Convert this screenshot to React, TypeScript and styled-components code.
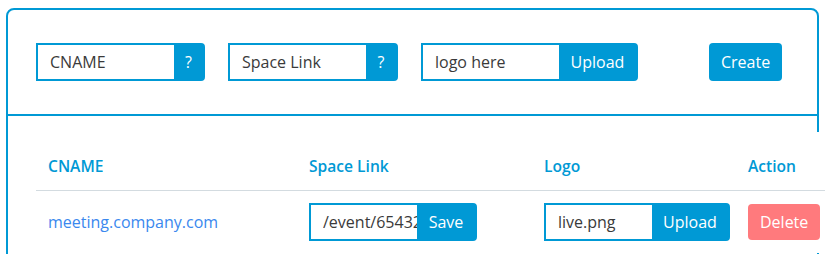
import React from 'react';
import styled, { createGlobalStyle } from 'styled-components';

const BLUE = '#0099d5';

const GlobalStyle = createGlobalStyle`
  body {
    margin: 0;
    background: #ffffff;
    font-family: 'Open Sans', 'Liberation Sans', sans-serif;
    overflow: hidden;
  }
`;

// Styled components
const Card = styled.div`
  margin: 8px 0 0 6px;
  width: 813px;
  min-height: 400px;
  box-sizing: border-box;
  border: 2px solid ${BLUE};
  border-radius: 8px;
`;

const CreateBar = styled.div`
  display: flex;
  align-items: center;
  gap: 23px;
  padding: 33px 0 33px 28px;
  border-bottom: 2px solid ${BLUE};
`;

const InputGroup = styled.div<{ $w: number }>`
  display: flex;
  width: ${(p) => p.$w}px;
  height: 38px;
  box-sizing: border-box;
  border: 2px solid ${BLUE};
  border-radius: 0 4px 4px 0;
  background: ${BLUE};
  overflow: hidden;
`;

const TextInput = styled.input<{ $w: number }>`
  width: ${(p) => p.$w}px;
  flex: none;
  box-sizing: border-box;
  border: none;
  outline: none;
  margin: 0;
  padding: 0 0 0 12px;
  background: #ffffff;
  font-family: inherit;
  font-size: 16px;
  color: #3a3a3a;
`;

const GroupButton = styled.button`
  flex: 1;
  border: none;
  margin: 0;
  padding: 0;
  background: ${BLUE};
  color: #ffffff;
  font-family: inherit;
  font-size: 16px;
  text-align: center;
  cursor: pointer;
`;

const SolidButton = styled.button<{ $danger?: boolean }>`
  height: ${(p) => (p.$danger ? 36 : 38)}px;
  padding: 0 12px;
  border: none;
  border-radius: 4px;
  background: ${(p) => (p.$danger ? '#ff7a7d' : BLUE)};
  color: #ffffff;
  font-family: inherit;
  font-size: 16px;
  cursor: pointer;
`;

const CreateButton = styled(SolidButton)`
  margin-left: 48px;
`;

const ListSection = styled.div`
  padding: 16px 0 0 28px;
`;

const Table = styled.table`
  width: 795px;
  table-layout: fixed;
  border-collapse: collapse;
  background: #ffffff;
`;

const HeadCell = styled.th`
  padding: 23px 12px 12px;
  line-height: 23px;
  text-align: left;
  font-size: 15.6px;
  font-weight: 600;
  color: ${BLUE};
  border-bottom: 1px solid #d3dbe0;
`;

const Cell = styled.td`
  padding: 12px;
  vertical-align: middle;
`;

const DomainLink = styled.a`
  font-size: 16px;
  color: #3a88ee;
  text-decoration: none;
`;

const App: React.FC = () => {
  return (
    <>
      <GlobalStyle />
      <Card>
        <CreateBar>
          <InputGroup $w={169}>
            <TextInput $w={136} defaultValue="CNAME" />
            <GroupButton>?</GroupButton>
          </InputGroup>
          <InputGroup $w={170}>
            <TextInput $w={136} defaultValue="Space Link" />
            <GroupButton>?</GroupButton>
          </InputGroup>
          <InputGroup $w={217}>
            <TextInput $w={136} defaultValue="logo here" />
            <GroupButton>Upload</GroupButton>
          </InputGroup>
          <CreateButton>Create</CreateButton>
        </CreateBar>

        <ListSection>
          <Table>
            <colgroup>
              <col style={{ width: 261 }} />
              <col style={{ width: 235 }} />
              <col style={{ width: 204 }} />
              <col style={{ width: 95 }} />
            </colgroup>
            <thead>
              <tr>
                <HeadCell>CNAME</HeadCell>
                <HeadCell>Space Link</HeadCell>
                <HeadCell>Logo</HeadCell>
                <HeadCell>Action</HeadCell>
              </tr>
            </thead>
            <tbody>
              <tr>
                <Cell>
                  <DomainLink href="#">meeting.company.com</DomainLink>
                </Cell>
                <Cell>
                  <InputGroup $w={168}>
                    <TextInput $w={106} defaultValue="/event/6543210" />
                    <GroupButton>Save</GroupButton>
                  </InputGroup>
                </Cell>
                <Cell>
                  <InputGroup $w={186}>
                    <TextInput $w={106} defaultValue="live.png" />
                    <GroupButton>Upload</GroupButton>
                  </InputGroup>
                </Cell>
                <Cell>
                  <SolidButton $danger>Delete</SolidButton>
                </Cell>
              </tr>
            </tbody>
          </Table>
        </ListSection>
      </Card>
    </>
  );
};

export default App;
